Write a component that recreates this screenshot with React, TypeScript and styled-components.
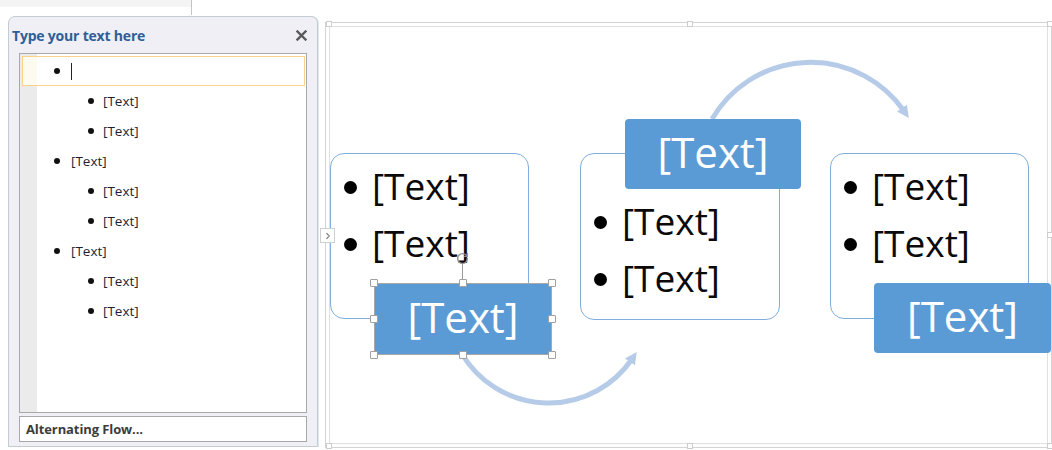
import React from 'react';
import styled, { createGlobalStyle } from 'styled-components';
import { RotateCw, ChevronRight } from 'lucide-react';

const GlobalStyle = createGlobalStyle`
  body {
    margin: 0;
    background: #fff;
    font-family: 'Open Sans', 'Noto Sans', sans-serif;
  }
`;

const Page = styled.div`
  width: 1052px;
  height: 450px;
  overflow: hidden;
  position: relative;
`;

const TopStrip = styled.div`
  height: 16px;
`;

const RibbonStub = styled.div`
  width: 191px;
  height: 15px;
  border-right: 1px solid #c4c4c4;
  background: linear-gradient(to bottom, #f4f4f4 0 7px, #fff 7px);
`;

const Main = styled.div`
  display: flex;
  align-items: flex-start;
`;

const Panel = styled.div`
  box-sizing: border-box;
  margin-left: 8px;
  width: 310px;
  height: 431px;
  background: #efeff5;
  border: 1px solid #c3cbd3;
  border-radius: 7px 7px 0 0;
  box-shadow: 1px 0 0 #dde8ef;
  display: flex;
  flex-direction: column;
`;

const PanelHeader = styled.div`
  height: 36px;
  display: flex;
  align-items: center;
  justify-content: space-between;
  padding: 0 10px 0 3px;
`;

const PanelTitle = styled.div`
  font-size: 14px;
  font-weight: 700;
  color: #2f5f98;
  letter-spacing: -0.2px;
`;

const CloseButton = styled.div`
  width: 12px;
  height: 12px;
  display: flex;
  align-items: center;
  justify-content: center;
`;

const TextBox = styled.div`
  box-sizing: border-box;
  margin-left: 10px;
  width: 288px;
  height: 360px;
  border: 1px solid #a8a8a8;
  padding: 2px 1px 0 2px;
  background: linear-gradient(to right, #ebebeb 0 17px, #fff 17px);
`;

const Row = styled.div<{ $level: number; $active?: boolean }>`
  box-sizing: border-box;
  height: 30px;
  display: flex;
  align-items: center;
  gap: ${p => (p.$level === 1 ? 11 : 9)}px;
  padding-left: ${p => (p.$level === 1 ? 31 : 65)}px;
  border: 1px solid ${p => (p.$active ? '#fcd18c' : 'transparent')};
  background: ${p => (p.$active ? 'linear-gradient(to right, #fdfaf0 0 14px, #fff 14px)' : 'transparent')};
  font-size: 13.5px;
  color: #221e33;
`;

const SmallDot = styled.span`
  width: 6px;
  height: 6px;
  border-radius: 50%;
  background: #111;
  flex: none;
`;

const Caret = styled.span`
  width: 1px;
  height: 17px;
  background: #222;
`;

const Footer = styled.div`
  box-sizing: border-box;
  margin: 3px 0 0 10px;
  width: 288px;
  height: 26px;
  border: 1px solid #a8a8a8;
  background: #fff;
  display: flex;
  align-items: center;
  padding-left: 6px;
  font-size: 13px;
  font-weight: 700;
  color: #3c3c3c;
  letter-spacing: -0.1px;
`;

const Canvas = styled.div`
  box-sizing: border-box;
  position: relative;
  margin: 6px 0 0 7px;
  width: 727px;
  height: 426px;
  border: 1px solid #d4d4d4;
  box-shadow: inset 0 0 0 3px #fff, inset 0 0 0 4px #e0e0e0;
`;

const ExpandTab = styled.div`
  position: absolute;
  left: -6px;
  top: 205px;
  width: 15px;
  height: 15px;
  box-sizing: border-box;
  background: #fff;
  border: 1px solid #cfcfcf;
  display: flex;
  align-items: center;
  justify-content: center;
  z-index: 3;
`;

const FrameHandle = styled.div<{ $x: number; $y: number }>`
  position: absolute;
  left: ${p => p.$x - 3}px;
  top: ${p => p.$y - 3}px;
  width: 6px;
  height: 6px;
  box-sizing: border-box;
  background: #fff;
  border: 1px solid #cdcdcd;
  z-index: 3;
`;

const ArrowLayer = styled.svg`
  position: absolute;
  left: 0;
  top: 0;
  width: 725px;
  height: 424px;
  z-index: 0;
`;

const ListBox = styled.div<{ $x: number; $y: number; $w: number; $h: number; $pad: number }>`
  position: absolute;
  left: ${p => p.$x}px;
  top: ${p => p.$y}px;
  width: ${p => p.$w}px;
  height: ${p => p.$h}px;
  box-sizing: border-box;
  background: #fff;
  border: 1px solid #80aedd;
  border-radius: 14px;
  padding-top: ${p => p.$pad}px;
  z-index: 1;
`;

const BigItem = styled.div`
  height: 57px;
  display: flex;
  align-items: center;
  gap: 15px;
  padding-left: 13px;
  font-size: 37px;
  color: #0a0a0a;
`;

const BigDot = styled.span`
  width: 13px;
  height: 13px;
  border-radius: 50%;
  background: #000;
  flex: none;
  margin-top: 4px;
`;

const Label = styled.div<{ $x: number; $y: number; $w: number; $h: number }>`
  position: absolute;
  left: ${p => p.$x}px;
  top: ${p => p.$y}px;
  width: ${p => p.$w}px;
  height: ${p => p.$h}px;
  box-sizing: border-box;
  padding-bottom: 5px;
  background: #5b9bd5;
  border-radius: 4px;
  display: flex;
  align-items: center;
  justify-content: center;
  font-size: 42px;
  color: #fff;
  z-index: 2;
`;

const Handle = styled.div<{ $x: number; $y: number }>`
  position: absolute;
  left: ${p => p.$x - 4}px;
  top: ${p => p.$y - 4}px;
  width: 8px;
  height: 8px;
  box-sizing: border-box;
  background: #fff;
  border: 1px solid #a0a0a0;
  border-radius: 1px;
  z-index: 4;
`;

const SelectionOutline = styled.div<{ $x: number; $y: number; $w: number; $h: number }>`
  position: absolute;
  left: ${p => p.$x}px;
  top: ${p => p.$y}px;
  width: ${p => p.$w}px;
  height: ${p => p.$h}px;
  box-sizing: border-box;
  border: 1px solid #a8a8a8;
  z-index: 3;
`;

const RotateStem = styled.div`
  position: absolute;
  left: 136px;
  top: 240px;
  width: 1px;
  height: 20px;
  background: #9a9a9a;
  z-index: 3;
`;

const RotateKnob = styled.div`
  position: absolute;
  left: 129px;
  top: 228px;
  width: 14px;
  height: 14px;
  display: flex;
  align-items: center;
  justify-content: center;
  z-index: 4;
`;

const outline = [
  { level: 1, text: '', active: true },
  { level: 2, text: '[Text]' },
  { level: 2, text: '[Text]' },
  { level: 1, text: '[Text]' },
  { level: 2, text: '[Text]' },
  { level: 2, text: '[Text]' },
  { level: 1, text: '[Text]' },
  { level: 2, text: '[Text]' },
  { level: 2, text: '[Text]' },
];

const frameHandles = [
  [3, 1], [364, 1], [724, 1], [724, 212], [3, 423], [364, 423], [724, 423],
];

// selected shape: first label box (canvas coords)
const sel = { x: 48, y: 260, w: 178, h: 72 };
const selHandles = [
  [sel.x, sel.y], [sel.x + sel.w / 2, sel.y], [sel.x + sel.w, sel.y],
  [sel.x, sel.y + sel.h / 2], [sel.x + sel.w, sel.y + sel.h / 2],
  [sel.x, sel.y + sel.h], [sel.x + sel.w / 2, sel.y + sel.h], [sel.x + sel.w, sel.y + sel.h],
];

const App: React.FC = () => {
  return (
    <Page>
      <GlobalStyle />
      <TopStrip>
        <RibbonStub />
      </TopStrip>
      <Main>
        <Panel>
          <PanelHeader>
            <PanelTitle>Type your text here</PanelTitle>
            <CloseButton>
              <svg width="11" height="11" viewBox="0 0 11 11">
                <path d="M1.5 1.5 L9.5 9.5 M9.5 1.5 L1.5 9.5" stroke="#5a5a5a" strokeWidth="2.4" strokeLinecap="square" />
              </svg>
            </CloseButton>
          </PanelHeader>
          <TextBox>
            {outline.map((r, i) => (
              <Row key={i} $level={r.level} $active={r.active}>
                <SmallDot />
                {r.active ? <Caret /> : <span>{r.text}</span>}
              </Row>
            ))}
          </TextBox>
          <Footer>Alternating Flow...</Footer>
        </Panel>

        <Canvas>
          <ExpandTab>
            <ChevronRight size={10} color="#8a8a8a" strokeWidth={3} />
          </ExpandTab>
          {frameHandles.map(([x, y], i) => (
            <FrameHandle key={i} $x={x} $y={y} />
          ))}

          <ArrowLayer viewBox="0 0 725 424">
            <defs>
              <marker id="head" viewBox="0 0 10 10" refX="3" refY="5" markerWidth="2.4" markerHeight="2.6" orient="auto">
                <path d="M0 0 L10 5 L0 10 Z" fill="#b6cbe8" />
              </marker>
            </defs>
            <path d="M136 331 A 101 101 0 0 0 306 336" fill="none" stroke="#b6cbe8" strokeWidth="5" markerEnd="url(#head)" />
            <path d="M386 96 A 114 114 0 0 1 578 88" fill="none" stroke="#b6cbe8" strokeWidth="5" markerEnd="url(#head)" />
          </ArrowLayer>

          <ListBox $x={4} $y={130} $w={199} $h={166} $pad={3}>
            <BigItem><BigDot />[Text]</BigItem>
            <BigItem><BigDot />[Text]</BigItem>
          </ListBox>
          <Label $x={sel.x} $y={sel.y} $w={sel.w} $h={sel.h}>[Text]</Label>

          <ListBox $x={254} $y={130} $w={200} $h={167} $pad={38}>
            <BigItem><BigDot />[Text]</BigItem>
            <BigItem><BigDot />[Text]</BigItem>
          </ListBox>
          <Label $x={299} $y={96} $w={176} $h={70}>[Text]</Label>

          <ListBox $x={504} $y={130} $w={199} $h={166} $pad={3}>
            <BigItem><BigDot />[Text]</BigItem>
            <BigItem><BigDot />[Text]</BigItem>
          </ListBox>
          <Label $x={548} $y={260} $w={177} $h={70}>[Text]</Label>

          <SelectionOutline $x={sel.x} $y={sel.y} $w={sel.w} $h={sel.h} />
          <RotateStem />
          <RotateKnob>
            <RotateCw size={13} color="#8e8e8e" strokeWidth={2.6} />
          </RotateKnob>
          {selHandles.map(([x, y], i) => (
            <Handle key={i} $x={x} $y={y} />
          ))}
        </Canvas>
      </Main>
    </Page>
  );
};

export default App;
